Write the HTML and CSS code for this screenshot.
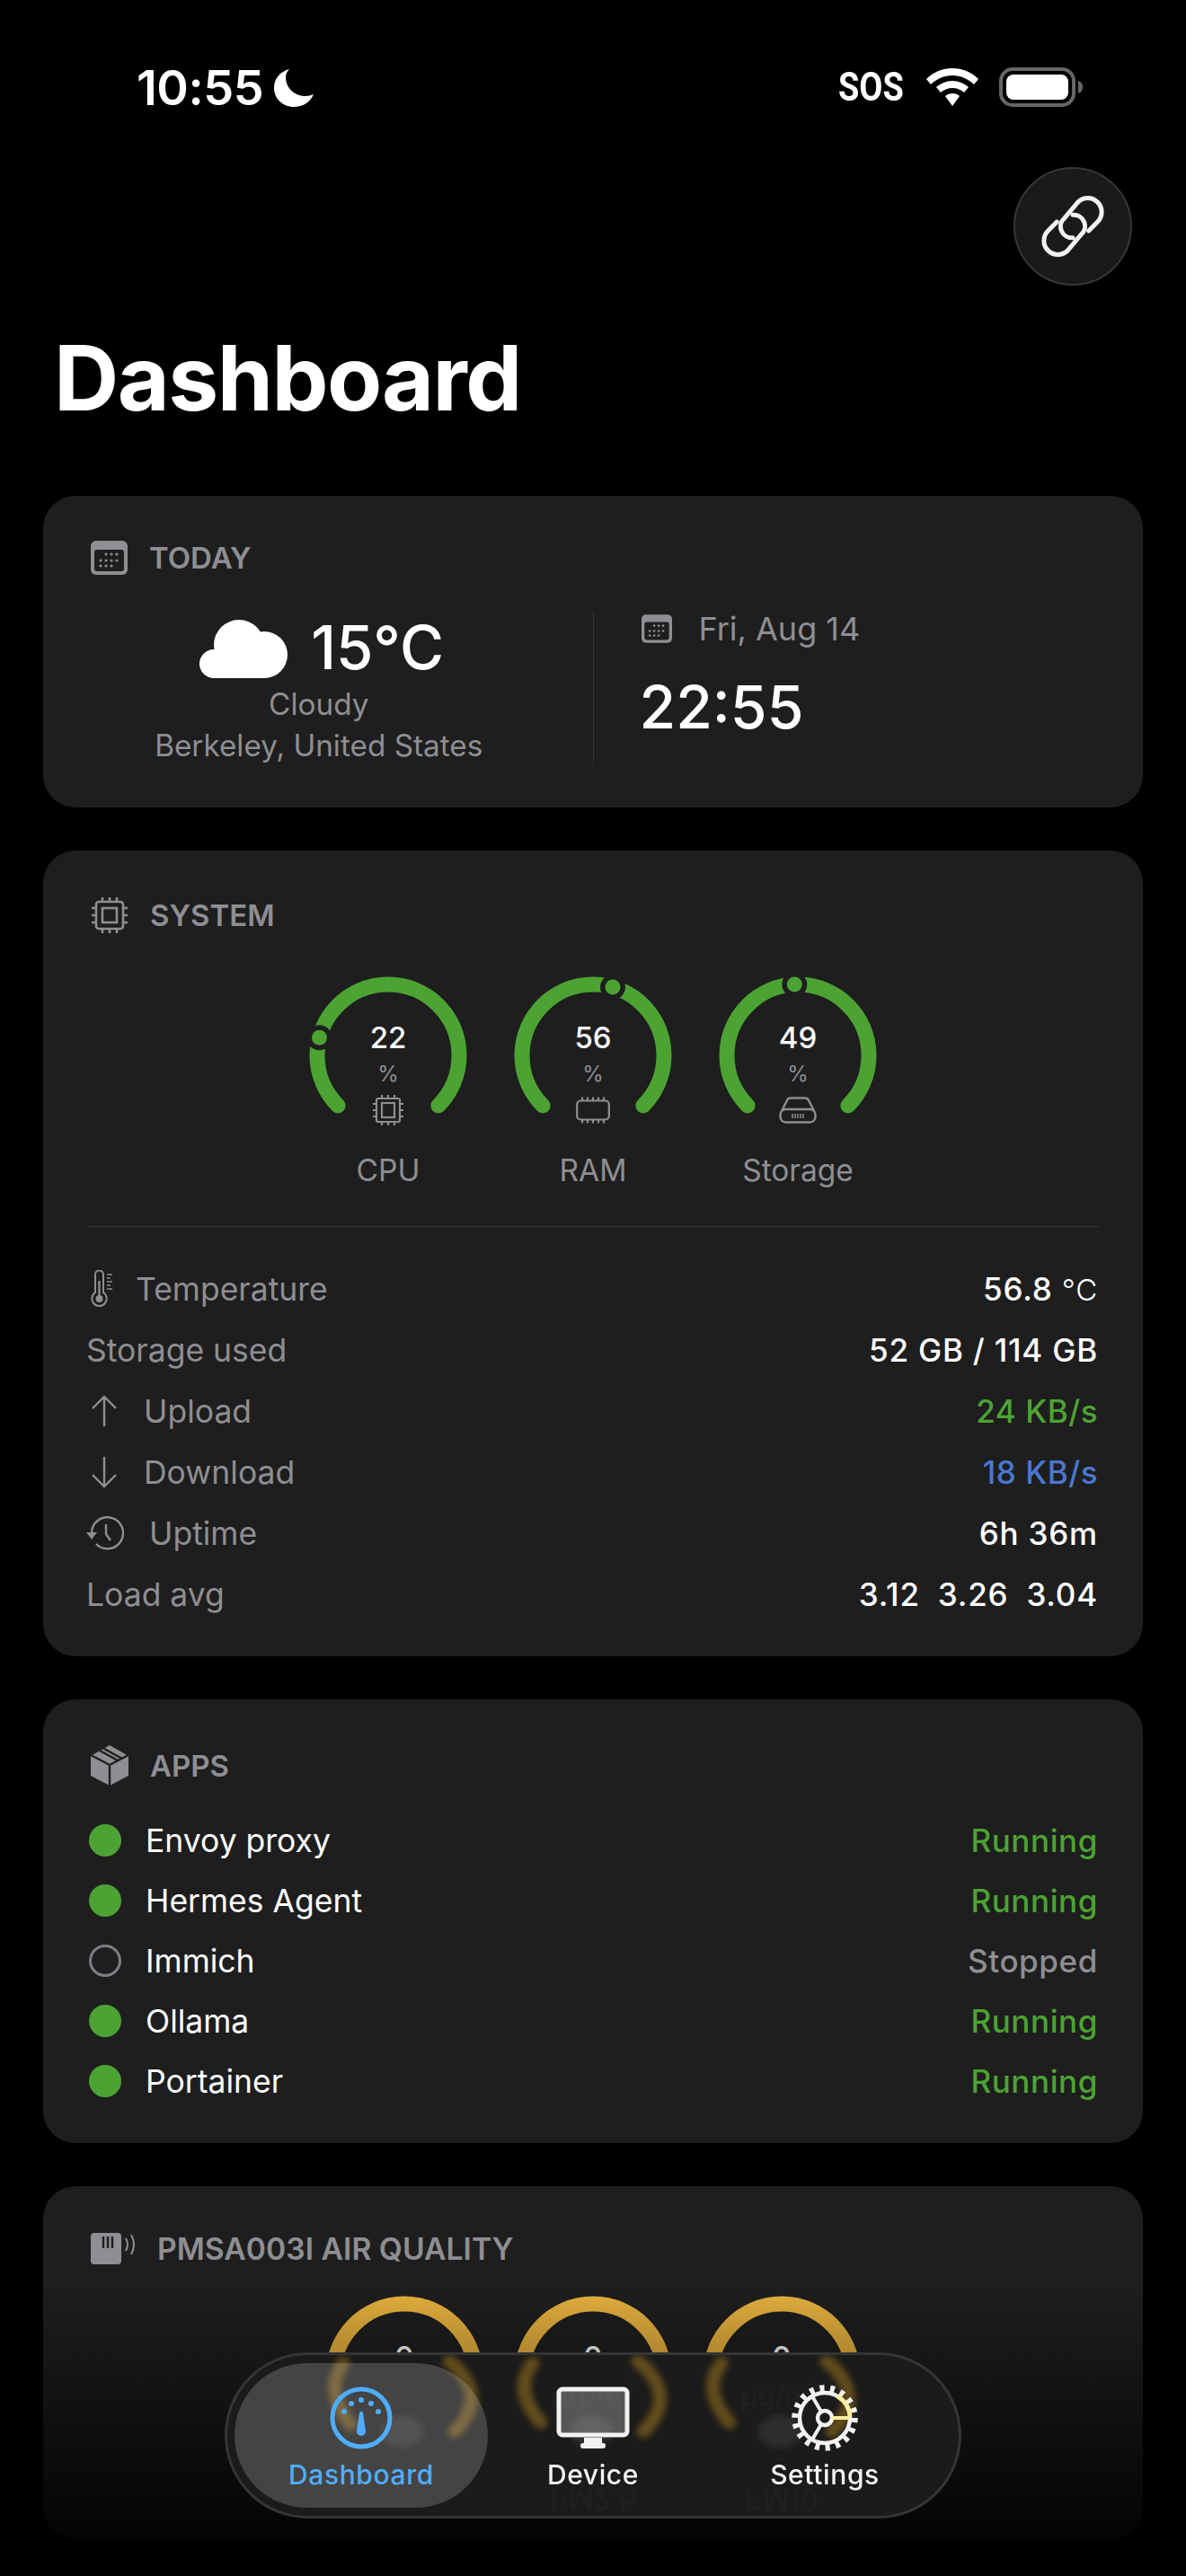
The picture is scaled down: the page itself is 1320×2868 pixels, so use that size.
FILE: index.html
```html
<!DOCTYPE html>
<html lang="en">
<head>
  <meta charset="UTF-8" />
  <meta name="viewport" content="width=device-width, initial-scale=1.0" />
  <title>Dashboard</title>
  <link rel="stylesheet" href="styles.css">
</head>
<body>

  <!-- status bar -->
  <div class="status-bar">
    <div class="status-left">
      <span class="status-time">10:55</span>
      <svg class="moon" viewBox="0 0 44 42"><path d="M17 0C6 3 0 11 0 21c0 12 10 21 22 21 10 0 18-5 22-14-3 1-6 2-9 2C22 30 13 20 13 9c0-3 1-6 4-9z"/></svg>
    </div>
    <div class="status-right">
      <span class="sos">SOS</span>
      <svg class="wifi" viewBox="0 0 58 42"><path d="M29 0c11 0 21 4 29 12l-5 6C47 12 38 8 29 8S11 12 5 18l-5-6C8 4 18 0 29 0z"/><path d="M29 14c7 0 13 3 18 7l-5 6c-3-3-8-5-13-5s-10 2-13 5l-5-6c5-4 11-7 18-7z"/><path d="M29 28c3 0 6 1 8 3l-8 11-8-11c2-2 5-3 8-3z"/></svg>
      <svg class="battery" viewBox="0 0 94 44"><rect x="2" y="2" width="81" height="40" rx="13" fill="none" stroke="#666" stroke-width="4"/><rect x="8" y="8" width="69" height="28" rx="8" fill="#fff"/><path d="M88 15c3 1 5 3 5 7s-2 6-5 7z" fill="#666"/></svg>
    </div>
  </div>

  <div class="top-actions">
    <button class="link-button">
      <svg viewBox="-40 -40 80 80" width="80" height="80">
        <g transform="rotate(-45)" fill="none" stroke="#f2f2f2" stroke-width="5" stroke-linecap="round">
          <path d="M9 16H23A15 15 0 0 0 23 -15L0 -13A12.500 12.500 0 0 0 -9 9"/>
          <path d="M-9 -16H-23A15 15 0 0 0 -23 15L0 13A12.500 12.500 0 0 0 9 -9"/>
        </g>
      </svg>
    </button>
  </div>

  <h1>Dashboard</h1>

  <div class="cards">

    <!-- today -->
    <section class="card">
      <div class="card-title">
        <svg class="title-icon" width="41" height="38" viewBox="0 0 41 38">
          <rect width="41" height="38" rx="6" fill="#8e8e93"/>
          <rect x="4" y="10" width="33" height="24" rx="3" fill="#1e1e1e"/>
          <g fill="#8e8e93"><circle cx="17" cy="15" r="1.6"/><circle cx="23" cy="15" r="1.6"/><circle cx="29" cy="15" r="1.6"/><circle cx="11" cy="22" r="1.6"/><circle cx="17" cy="22" r="1.6"/><circle cx="23" cy="22" r="1.6"/><circle cx="29" cy="22" r="1.6"/><circle cx="11" cy="28" r="1.6"/><circle cx="17" cy="28" r="1.6"/><circle cx="23" cy="28" r="1.6"/></g>
        </svg>
        <span>TODAY</span>
      </div>
      <div class="today-body">
        <div class="weather">
          <div class="weather-main">
            <svg class="cloud" viewBox="0 0 98 65" fill="#fff"><circle cx="44" cy="28" r="28"/><circle cx="72" cy="39" r="26"/><circle cx="16" cy="49" r="16"/><rect x="16" y="40" width="56" height="25"/></svg>
            <span class="temp">15°C</span>
          </div>
          <div class="weather-sub">Cloudy</div>
          <div class="weather-sub">Berkeley, United States</div>
        </div>
        <div class="today-divider"></div>
        <div class="clock">
          <div class="clock-date">
            <svg width="34" height="32" viewBox="0 0 41 38">
              <rect width="41" height="38" rx="6" fill="#8e8e93"/>
              <rect x="4" y="10" width="33" height="24" rx="3" fill="#1e1e1e"/>
              <g fill="#8e8e93"><circle cx="17" cy="15" r="1.6"/><circle cx="23" cy="15" r="1.6"/><circle cx="29" cy="15" r="1.6"/><circle cx="11" cy="22" r="1.6"/><circle cx="17" cy="22" r="1.6"/><circle cx="23" cy="22" r="1.6"/><circle cx="29" cy="22" r="1.6"/><circle cx="11" cy="28" r="1.6"/><circle cx="17" cy="28" r="1.6"/><circle cx="23" cy="28" r="1.6"/></g>
            </svg>
            <span>Fri, Aug 14</span>
          </div>
          <div class="clock-time">22:55</div>
        </div>
      </div>
    </section>

    <!-- system -->
    <section class="card card-system">
      <div class="card-title title-system">
        <svg class="title-icon" width="42" height="42" viewBox="0 0 42 42" fill="none" stroke="#8e8e93" stroke-width="2.6">
          <rect x="6" y="6" width="30" height="30" rx="3"/>
          <rect x="13" y="13" width="16" height="16"/>
          <path d="M13 1v5M21 1v5M29 1v5M13 36v5M21 36v5M29 36v5M1 13h5M1 21h5M1 29h5M36 13h5M36 21h5M36 29h5"/>
        </svg>
        <span>SYSTEM</span>
      </div>
      <div class="gauges">
        <div class="gauge">
          <div class="dial">
            <svg class="dial-svg" width="174" height="178" viewBox="0 0 174 178">
              <path class="arc green" d="M31.1 142.9A79 79 0 1 1 142.9 142.9"/>
              <circle cx="10.5" cy="67.3" r="14" fill="#1e1e1e"/>
              <circle cx="10.5" cy="67.3" r="8.5" fill="#4ca333"/>
            </svg>
            <div class="dial-text">
              <span class="dial-value">22</span>
              <span class="dial-unit">%</span>
              <svg width="36" height="36" viewBox="0 0 36 36" fill="none" stroke="#8e8e93" stroke-width="2.2">
                <rect x="5" y="5" width="26" height="26" rx="2"/>
                <rect x="11" y="10" width="14" height="16"/>
                <path d="M11 1v4M18 1v4M25 1v4M11 31v4M18 31v4M25 31v4M1 11h4M1 18h4M1 25h4M31 11h4M31 18h4M31 25h4"/>
              </svg>
            </div>
          </div>
          <div class="gauge-label">CPU</div>
        </div>
        <div class="gauge">
          <div class="dial">
            <svg class="dial-svg" width="174" height="178" viewBox="0 0 174 178">
              <path class="arc green" d="M31.1 142.9A79 79 0 1 1 142.9 142.9"/>
              <circle cx="109" cy="11.1" r="14" fill="#1e1e1e"/>
              <circle cx="109" cy="11.1" r="8.5" fill="#4ca333"/>
            </svg>
            <div class="dial-text">
              <span class="dial-value">56</span>
              <span class="dial-unit">%</span>
              <svg width="38" height="36" viewBox="0 0 38 30" fill="none" stroke="#8e8e93" stroke-width="2.2">
                <rect x="1.2" y="4.5" width="35.6" height="21" rx="4"/>
                <path d="M7 0.5v4M13 0.5v4M19 0.5v4M25 0.5v4M31 0.5v4M7 25.5v4M13 25.5v4M19 25.5v4M25 25.5v4M31 25.5v4"/>
              </svg>
            </div>
          </div>
          <div class="gauge-label">RAM</div>
        </div>
        <div class="gauge">
          <div class="dial">
            <svg class="dial-svg" width="174" height="178" viewBox="0 0 174 178">
              <path class="arc green" d="M31.1 142.9A79 79 0 1 1 142.9 142.9"/>
              <circle cx="83.3" cy="8.1" r="14" fill="#1e1e1e"/>
              <circle cx="83.3" cy="8.1" r="8.5" fill="#4ca333"/>
            </svg>
            <div class="dial-text">
              <span class="dial-value">49</span>
              <span class="dial-unit">%</span>
              <svg width="42" height="36" viewBox="0 0 42 30" fill="none" stroke="#8e8e93" stroke-width="2.4">
                <path d="M3 16 9 4Q10 1.5 13 1.5H29Q32 1.5 33 4L39 16"/>
                <rect x="1.5" y="14" width="39" height="14.5" rx="6"/>
                <path d="M15 19v5M18 19v5M21 19v5M24 19v5M27 19v5" stroke-width="1.5"/>
              </svg>
            </div>
          </div>
          <div class="gauge-label">Storage</div>
        </div>
      </div>
      <div class="divider"></div>
      <div class="stat-rows">
        <div class="stat-row">
          <div class="stat-name stat-temp">
            <svg width="25" height="42" viewBox="0 0 25 42" fill="none" stroke="#8e8e93" stroke-width="2">
              <path d="M5 25V5a4.500 4.500 0 0 1 9 0V25a8.200 8.200 0 1 1-9 0z"/>
              <path d="M9.500 12V32" stroke-width="2.400"/>
              <circle cx="9.500" cy="32" r="4" fill="#8e8e93" stroke="none"/>
              <path d="M18 5h6M18 9h4M18 13h6M18 17h4M18 21h6" stroke-width="1.500"/>
            </svg>
            <span>Temperature</span>
          </div>
          <div class="stat-value">56.8 <small>°C</small></div>
        </div>
        <div class="stat-row">
          <div class="stat-name"><span>Storage used</span></div>
          <div class="stat-value">52 GB / 114 GB</div>
        </div>
        <div class="stat-row">
          <div class="stat-name stat-arrow">
            <svg width="30" height="36" viewBox="0 0 30 36" fill="none" stroke="#8e8e93" stroke-width="2.400"><path d="M15 35V2M2 15 15 2 28 15"/></svg>
            <span>Upload</span>
          </div>
          <div class="stat-value up">24 KB/s</div>
        </div>
        <div class="stat-row">
          <div class="stat-name stat-arrow">
            <svg width="30" height="36" viewBox="0 0 30 36" fill="none" stroke="#8e8e93" stroke-width="2.400"><path d="M15 1V34M2 21 15 34 28 21"/></svg>
            <span>Download</span>
          </div>
          <div class="stat-value down">18 KB/s</div>
        </div>
        <div class="stat-row">
          <div class="stat-name stat-uptime">
            <svg width="42" height="38" viewBox="0 0 42 38" fill="none" stroke="#8e8e93" stroke-width="2.400"><path d="M6 19A17.500 17.500 0 1 1 11 31"/><path d="M0 18H12L6 26z" fill="#8e8e93" stroke="none"/><path d="M22 9V20L27 27"/></svg>
            <span>Uptime</span>
          </div>
          <div class="stat-value">6h 36m</div>
        </div>
        <div class="stat-row">
          <div class="stat-name"><span>Load avg</span></div>
          <div class="stat-value load"><span>3.12</span><span>3.26</span><span>3.04</span></div>
        </div>
      </div>
    </section>

    <!-- apps -->
    <section class="card card-apps">
      <div class="card-title title-apps">
        <svg class="title-icon" width="42" height="45" viewBox="0 0 42 45">
          <path fill="#8e8e93" d="M21 0 42 12V34L21 45 0 34V12z"/>
          <path d="M21 45V22M0 11 21 22 42 11M10 6 31 17.500" fill="none" stroke="#1e1e1e" stroke-width="2.400"/>
          <path d="M14 3.500 35 15" fill="none" stroke="#1e1e1e" stroke-width="2.400"/>
        </svg>
        <span>APPS</span>
      </div>
      <div class="app-rows">
        <div class="app-row"><span class="dot on"></span><span class="app-name">Envoy proxy</span><span class="app-state running">Running</span></div>
        <div class="app-row"><span class="dot on"></span><span class="app-name">Hermes Agent</span><span class="app-state running">Running</span></div>
        <div class="app-row"><span class="dot off"></span><span class="app-name">Immich</span><span class="app-state">Stopped</span></div>
        <div class="app-row"><span class="dot on"></span><span class="app-name">Ollama</span><span class="app-state running">Running</span></div>
        <div class="app-row"><span class="dot on"></span><span class="app-name">Portainer</span><span class="app-state running">Running</span></div>
      </div>
    </section>

    <!-- air quality, the rest of it sits under the tab bar -->
    <section class="card card-air">
      <div class="card-title title-air">
        <svg class="title-icon" width="51" height="35" viewBox="0 0 51 35">
          <rect width="34" height="35" rx="4" fill="#8e8e93"/>
          <path d="M14 4v13M19 4v13M24 4v13" stroke="#1e1e1e" stroke-width="2.400"/>
          <path d="M39 6Q43 13 39 20M45 2Q51 13 45 24" fill="none" stroke="#8e8e93" stroke-width="2"/>
        </svg>
        <span>PMSA003I AIR QUALITY</span>
      </div>
      <div class="gauges gauges-air">
        <div class="gauge">
          <div class="dial">
            <svg class="dial-svg" width="174" height="178" viewBox="0 0 174 178"><path class="arc yellow" d="M31.1 142.9A79 79 0 1 1 142.9 142.9"/></svg>
            <div class="dial-text"><span class="dial-value">0</span></div>
          </div>
        </div>
        <div class="gauge">
          <div class="dial">
            <svg class="dial-svg" width="174" height="178" viewBox="0 0 174 178"><path class="arc yellow" d="M31.1 142.9A79 79 0 1 1 142.9 142.9"/></svg>
            <div class="dial-text"><span class="dial-value">0</span></div>
          </div>
        </div>
        <div class="gauge">
          <div class="dial">
            <svg class="dial-svg" width="174" height="178" viewBox="0 0 174 178"><path class="arc yellow" d="M31.1 142.9A79 79 0 1 1 142.9 142.9"/></svg>
            <div class="dial-text"><span class="dial-value">0</span></div>
          </div>
        </div>
      </div>
    </section>

  </div>

  <div class="bottom-fade"></div>

  <!-- tab bar: the layer in it fakes what the glass refracts from below -->
  <nav class="tab-bar">
    <svg class="glass-layer" width="814" height="179" viewBox="3 3 814 179">
      <defs>
        <filter id="soft" x="-30%" y="-30%" width="160%" height="160%"><feGaussianBlur stdDeviation="3.500"/></filter>
        <filter id="softer" x="-10%" y="-30%" width="120%" height="160%"><feGaussianBlur stdDeviation="0.800"/></filter>
      </defs>
      <g filter="url(#soft)" fill="none" stroke="#a87d1c" stroke-width="15" stroke-linecap="round" opacity="0.5">
        <path d="M132 12Q110 42 140 80"/><path d="M250 10Q296 48 256 88"/>
        <path d="M343 12Q320 42 352 78"/><path d="M460 10Q506 48 466 88"/>
        <path d="M553 12Q530 42 562 78"/><path d="M670 10Q716 48 676 88"/>
      </g>
      <g filter="url(#soft)" fill="#fff" opacity="0.08">
        <ellipse cx="198" cy="88" rx="24" ry="18"/><ellipse cx="408" cy="88" rx="24" ry="18"/><ellipse cx="618" cy="88" rx="24" ry="18"/>
      </g>
      <g class="mirror-text" text-anchor="middle" filter="url(#softer)">
        <text x="410" y="60">µg/m³</text>
        <text x="620" y="60">µg/m³</text>
        <text transform="translate(410 152) scale(1 -1)">PM2.5</text>
        <text transform="translate(620 152) scale(1 -1)">PM10</text>
      </g>
      <path filter="url(#softer)" d="M120 181H160M250 181H272M340 181H385M460 181H485M553 181H595M670 181H695" stroke="#a87d1c" stroke-width="2" opacity="0.4"/>
    </svg>
    <div class="tab active">
      <svg width="70" height="70" viewBox="0 0 70 70">
        <circle cx="35" cy="35" r="32" fill="none" stroke="#4fadfb" stroke-width="5"/>
        <g fill="#4fadfb">
          <circle cx="16" cy="28" r="3"/><circle cx="24" cy="19" r="3"/><circle cx="35" cy="15" r="3"/><circle cx="46" cy="19" r="3"/><circle cx="54" cy="28" r="3"/>
          <path d="M33 29Q35 26 37 29L40 50A5 5 0 0 1 30 50z"/>
        </g>
      </svg>
      <span>Dashboard</span>
    </div>
    <div class="tab">
      <svg width="82" height="70" viewBox="0 0 82 70">
        <rect x="3" y="3" width="76" height="51" rx="4" fill="#fff" fill-opacity="0.26" stroke="#f2f2f2" stroke-width="5"/>
        <path d="M31 57H51V63H31z" fill="#f2f2f2"/>
        <rect x="27" y="63" width="28" height="6" rx="3" fill="#f2f2f2"/>
      </svg>
      <span>Device</span>
    </div>
    <div class="tab">
      <svg width="76" height="76" viewBox="-38 -38 76 76" fill="none" stroke="#f2f2f2">
        <circle r="33" stroke-width="7.500" stroke-dasharray="5 6.520"/>
        <circle r="28" stroke-width="4.500"/>
        <circle r="8" stroke-width="4.500"/>
        <path d="M8 0H28M-4 -7-14 -24M-4 7-14 24" stroke-width="4"/>
        <path d="M8 0H28" stroke="#fff0a0" stroke-width="4"/>
        <path d="M14 -24A28 28 0 0 1 28 -2" stroke="#fff0a0" stroke-width="4.500"/>
      </svg>
      <span>Settings</span>
    </div>
  </nav>

</body>
</html>
```

FILE: styles.css
```css
/* --- Core & Layout --- */
html, body {
  margin: 0;
  height: 2868px;
  overflow: hidden;
}
body {
  position: relative;
  background: #000;
  color: #fff;
  font-family: "Inter", "Liberation Sans", sans-serif;
}
svg {
  display: block;
  flex-shrink: 0;
}

/* --- Status bar --- */
.status-bar {
  height: 186px;
  box-sizing: border-box;
  padding: 73px 114px 0 152px;
  display: flex;
  justify-content: space-between;
  align-items: flex-start;
}
.status-left {
  display: flex;
  align-items: center;
  gap: 12px;
}
.status-time {
  font-size: 54px;
  line-height: 50px;
  font-weight: 600;
  letter-spacing: -0.5px;
}
.moon {
  width: 44px;
  height: 42px;
  fill: #fff;
}
.status-right {
  display: flex;
  align-items: center;
  height: 44px;
  margin-top: 2px;
}
.sos {
  font-family: "Roboto", sans-serif;
  font-weight: 700;
  font-size: 44px;
  line-height: 44px;
  width: 69px;
  transform: scaleX(0.86);
  transform-origin: left center;
  white-space: nowrap;
}
.wifi {
  width: 58px;
  height: 42px;
  fill: #fff;
  margin-left: 29px;
}
.battery {
  width: 94px;
  height: 44px;
  margin-left: 23px;
}

/* --- Title area --- */
.top-actions {
  display: flex;
  justify-content: flex-end;
  padding-right: 60px;
}
.link-button {
  width: 132px;
  height: 132px;
  border-radius: 50%;
  border: 2px solid #363636;
  background: #1a1a1a;
  padding: 0;
  display: flex;
  align-items: center;
  justify-content: center;
}
h1 {
  margin: 45px 0 0 60px;
  font-size: 100px;
  line-height: 116px;
  font-weight: 700;
  letter-spacing: -1.5px;
}

/* --- Cards --- */
.cards {
  margin: 0 48px;
  padding-top: 73px;
  display: flex;
  flex-direction: column;
  gap: 48px;
}
.card {
  background: #1e1e1e;
  border-radius: 36px;
  padding: 48px;
}
.card-title {
  display: flex;
  align-items: center;
  gap: 24px;
  height: 42px;
  padding-left: 5px;
  color: #8e8e93;
  font-size: 33px;
  font-weight: 600;
}

/* --- Today --- */
.today-body {
  display: grid;
  grid-template-columns: 1fr 1px 1fr;
  height: 171px;
  margin-top: 38px;
}
.weather {
  padding-right: 46px;
  display: flex;
  flex-direction: column;
  align-items: center;
}
.weather-main {
  display: flex;
  align-items: center;
  gap: 26px;
  height: 76px;
  margin: 0 0 5px 7px;
}
.cloud {
  width: 98px;
  height: 65px;
  margin-top: 8px;
}
.temp {
  font-size: 67px;
  font-weight: 500;
  line-height: 76px;
  margin-top: 6px;
}
.weather-sub {
  font-size: 33.3px;
  line-height: 46px;
  color: #8e8e93;
}
.today-divider {
  background: #333;
}
.clock {
  padding-left: 51px;
}
.clock-date {
  display: flex;
  align-items: center;
  gap: 30px;
  height: 46px;
  color: #8e8e93;
  font-size: 36px;
  margin: -3px 0 0 2px;
}
.clock-time {
  font-size: 66px;
  font-weight: 500;
  line-height: 76px;
  margin-top: 26px;
}

/* --- Gauges --- */
.gauges {
  display: flex;
  justify-content: center;
  gap: 54px;
  margin-top: 51px;
}
.title-system {
  margin-top: 3px;
}
.title-system + .gauges {
  margin-top: 48px;
}
.gauges-air {
  gap: 36px;
  margin-top: 33px;
}
.gauge {
  width: 174px;
}
.dial {
  position: relative;
  height: 178px;
}
.dial-svg {
  overflow: visible;
}
.arc {
  fill: none;
  stroke-width: 17;
  stroke-linecap: round;
}
.arc.green {
  stroke: #4ca333;
}
.arc.yellow {
  stroke: #e8b33f;
}
.dial-text {
  position: absolute;
  top: 47px;
  left: 0;
  right: 0;
  display: flex;
  flex-direction: column;
  align-items: center;
}
.dial-value {
  font-size: 33px;
  line-height: 40px;
  font-weight: 500;
}
.dial-unit {
  font-size: 24px;
  line-height: 30px;
  margin: 6px 0 7px;
  color: #8e8e93;
}
.gauge-label {
  margin-top: 17px;
  font-size: 33.5px;
  line-height: 40px;
  text-align: center;
  color: #8e8e93;
}
.divider {
  height: 1px;
  background: #333;
  margin-top: 42px;
}

/* --- System rows --- */
.card-system {
  padding-bottom: 51px;
}
.stat-rows {
  display: flex;
  flex-direction: column;
  gap: 32px;
  margin-top: 51px;
}
.stat-row {
  display: flex;
  justify-content: space-between;
  align-items: center;
  height: 36px;
  font-size: 35.5px;
}
.stat-name {
  display: flex;
  align-items: center;
  color: #8e8e93;
}
.stat-temp {
  gap: 25px;
  margin-left: 5px;
}
.stat-arrow {
  gap: 29px;
  margin-left: 5px;
}
.stat-uptime {
  gap: 28px;
}
.stat-value {
  font-weight: 500;
  font-size: 35px;
  letter-spacing: 0.8px;
  margin-right: 2px;
}
.stat-value.up, .stat-value.down {
  letter-spacing: 0.5px;
}
.stat-value small {
  font-size: 33px;
  font-weight: 300;
}
.stat-value.up {
  color: #4ca333;
}
.stat-value.down {
  color: #4a78d0;
}
.stat-value.load {
  display: flex;
  gap: 20px;
}

/* --- Apps --- */
.card-apps {
  padding-bottom: 51px;
}
.title-apps {
  height: 45px;
  margin-top: 3px;
}
.app-rows {
  display: flex;
  flex-direction: column;
  gap: 31px;
  margin-top: 43px;
}
.app-row {
  display: flex;
  align-items: center;
  height: 36px;
  font-size: 35.5px;
}
.dot {
  width: 36px;
  height: 36px;
  box-sizing: border-box;
  border-radius: 50%;
  margin-left: 3px;
}
.dot.on {
  background: #4ca333;
}
.dot.off {
  border: 3px solid #7d7d85;
}
.app-name {
  margin-left: 27px;
  flex: 1;
}
.app-state {
  font-weight: 500;
  font-size: 35px;
  letter-spacing: 0.6px;
  color: #8e8e93;
  margin-right: 2px;
}
.app-state.running {
  color: #4ca333;
}

/* --- Air quality --- */
.card-air {
  padding-bottom: 92px;
}
.title-air {
  gap: 23px;
  font-size: 33.7px;
}

/* --- Bottom fade and tab bar --- */
.bottom-fade {
  position: absolute;
  left: 0;
  right: 0;
  bottom: 0;
  height: 328px;
  background: linear-gradient(to bottom, rgba(0, 0, 0, 0), #000);
}
.tab-bar {
  position: absolute;
  left: 250px;
  top: 2619px;
  width: 820px;
  height: 185px;
  box-sizing: border-box;
  border: 3px solid #353535;
  border-radius: 93px;
  background: #1b1b1b;
  overflow: hidden;
  display: grid;
  grid-template-columns: 282px 234px 1fr;
  padding: 9px 8px;
}
.glass-layer {
  position: absolute;
  left: 0;
  top: 0;
}
.mirror-text {
  font-size: 32px;
  fill: #fff;
  opacity: 0.03;
}
.tab {
  position: relative;
  display: flex;
  flex-direction: column;
  align-items: center;
  padding-top: 26px;
  color: #f4f4f4;
  font-size: 30px;
  line-height: 28px;
  font-weight: 500;
  letter-spacing: 0.6px;
}
.tab svg {
  height: 70px;
}
.tab span {
  margin-top: 14px;
}
.tab:last-child {
  padding-top: 23px;
}
.tab:last-child svg {
  height: 76px;
}
.tab:last-child span {
  margin-top: 11px;
}
.tab.active {
  background: rgba(255, 255, 255, 0.18);
  border-radius: 81px;
  color: #4fadfb;
}
```
